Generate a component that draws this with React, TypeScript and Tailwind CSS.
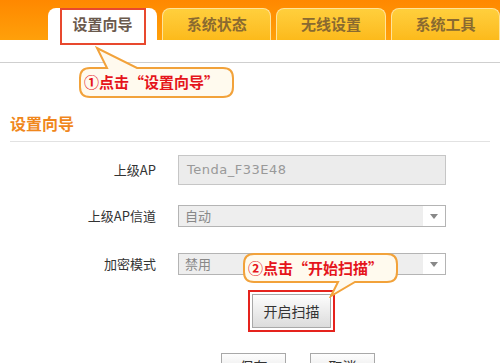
const cjk = { fontFamily: '"Noto Sans CJK SC", "Liberation Sans", sans-serif' };

function Tab({ label }: { label: string }) {
  return (
    <div className="w-[111px] h-[32px] rounded-t-[8px] border border-b-0 border-[#ffe39a] bg-gradient-to-b from-[#ffcf3c] to-[#fcba1a] flex items-center justify-center text-[15px] font-bold text-[#8a6a30]">
      {label}
    </div>
  );
}

function Select({ value }: { value: string }) {
  return (
    <div className="ml-[22px] w-[268px] h-[22px] border border-[#b4b4b4] flex bg-white">
      <div className="flex-1 bg-[#eeeeee] pl-[6px] text-[13px] leading-[20px] text-[#888]">{value}</div>
      <div className="w-[22px] flex items-center justify-center">
        <svg width="8" height="5" viewBox="0 0 8 5">
          <path d="M0 0 H8 L4 5 Z" fill="#888" />
        </svg>
      </div>
    </div>
  );
}

function Label({ text }: { text: string }) {
  return <div className="w-[156px] text-right text-[13px] text-[#333]">{text}</div>;
}

export default function App() {
  return (
    <div className="relative w-[500px] h-[363px] overflow-hidden bg-white" style={cjk}>
      {/* top tabs */}
      <div className="h-[40px] bg-gradient-to-b from-[#ff8800] to-[#ffa00a] flex items-end pl-[48px] gap-[5px]">
        <div className="relative w-[111px] h-[32px] rounded-t-[8px] bg-white flex items-center justify-center text-[15px] font-bold text-[#6b5a4d]">
          设置向导
          <div className="absolute left-[12px] top-0 w-[86px] h-[37px] border-2 border-[#e8482e]" />
        </div>
        <Tab label="系统状态" />
        <Tab label="无线设置" />
        <Tab label="系统工具" />
      </div>
      <div className="h-[23px] border-b border-[#cfcfcf]" />

      {/* title */}
      <div className="px-[10px]">
        <div className="h-[79px] pt-[50px] border-b border-[#e2e2e2] text-[16px] leading-[20px] font-bold text-[#f0871c]">
          设置向导
        </div>
      </div>

      {/* form */}
      <div className="flex items-center mt-[13px]">
        <Label text="上级AP" />
        <div className="ml-[22px] w-[268px] h-[30px] border border-[#c6c6c6] bg-[#ececec] pl-[8px] text-[13px] leading-[28px] tracking-[0.5px] text-[#999]" style={{ fontFamily: '"DejaVu Sans", sans-serif' }}>
          Tenda_F33E48
        </div>
      </div>
      <div className="flex items-center mt-[20px]">
        <Label text="上级AP信道" />
        <Select value="自动" />
      </div>
      <div className="flex items-center mt-[26px]">
        <Label text="加密模式" />
        <Select value="禁用" />
      </div>

      <div className="pl-[248px] mt-[15px]">
        <div className="w-[87px] h-[42px] border-2 border-[#e5231d] p-[2px]">
          <div className="w-full h-full border border-[#a8a8a8] bg-gradient-to-b from-[#fdfdfd] to-[#dcdcdc] flex items-center justify-center text-[14px] text-[#333]">
            开启扫描
          </div>
        </div>
      </div>

      <div className="flex pl-[221px] gap-[24px] mt-[21px]">
        <div className="w-[65px] h-[26px] border border-[#a8a8a8] bg-gradient-to-b from-[#fdfdfd] to-[#e4e4e4] flex items-center justify-center text-[14px] text-[#333]">
          保存
        </div>
        <div className="w-[65px] h-[26px] border border-[#a8a8a8] bg-gradient-to-b from-[#fdfdfd] to-[#e4e4e4] flex items-center justify-center text-[14px] text-[#333]">
          取消
        </div>
      </div>

      {/* callout 1 */}
      <div className="absolute left-[78px] top-[46px] w-[158px] h-[53px]">
        <svg className="absolute inset-0" width="158" height="53" viewBox="0 0 158 53">
          <path
            d="M12 22 H29 L19 2 L59 22 H145 Q155 22 155 32 V41 Q155 51 145 51 H12 Q2 51 2 41 V32 Q2 22 12 22 Z"
            fill="#fffaee"
            stroke="#f2a23a"
            strokeWidth="2"
          />
        </svg>
        <div className="absolute left-[6px] top-[24px] h-[25px] flex items-center text-[15px] font-bold text-[#e5141b] whitespace-nowrap">
          ①点击“设置向导”
        </div>
      </div>

      {/* callout 2 */}
      <div className="absolute left-[242px] top-[252px] w-[158px] h-[46px]">
        <svg className="absolute inset-0" width="158" height="46" viewBox="0 0 158 46">
          <path
            d="M12 2 H145 Q155 2 155 12 V20 Q155 30 145 30 H113 L89 44 L96 30 H12 Q2 30 2 20 V12 Q2 2 12 2 Z"
            fill="#fffaee"
            stroke="#f2a23a"
            strokeWidth="2"
          />
        </svg>
        <div className="absolute left-[6px] top-[4px] h-[25px] flex items-center text-[15px] font-bold text-[#e5141b] whitespace-nowrap">
          ②点击“开始扫描”
        </div>
      </div>
    </div>
  );
}
